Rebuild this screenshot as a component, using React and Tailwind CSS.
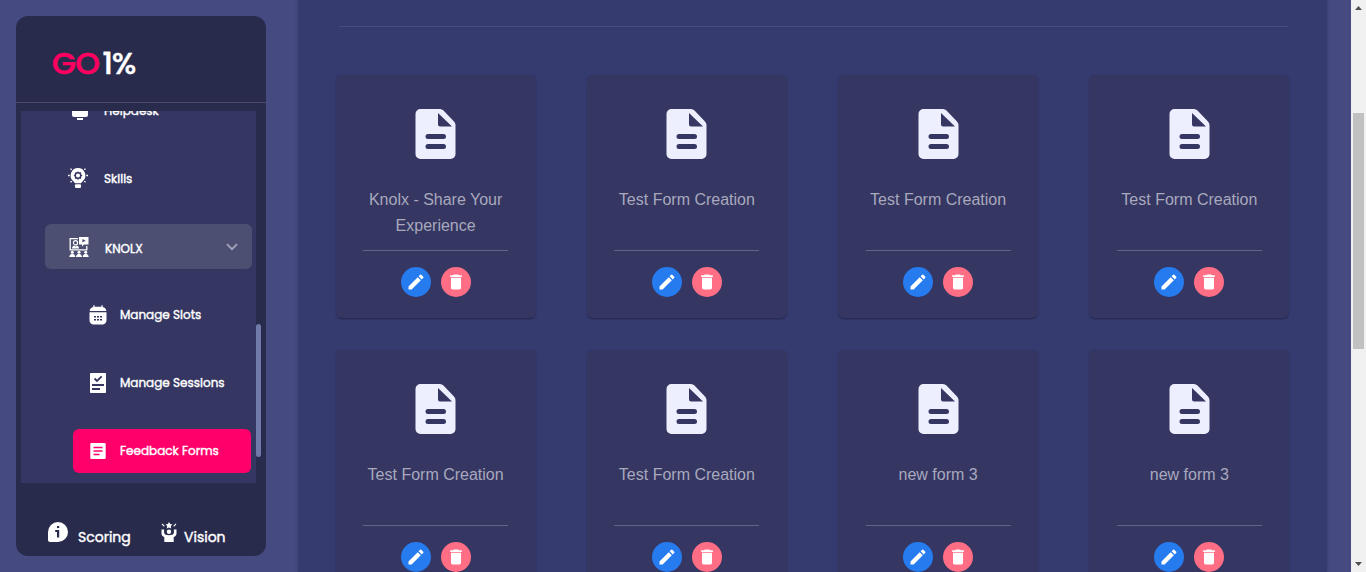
import { MdEdit, MdDelete } from "react-icons/md";

function MonitorIcon() {
  return (
    <svg width="20" height="20" viewBox="0 0 20 20" fill="#fff">
      <rect x="2" y="1" width="16" height="15" rx="2" />
      <rect x="7" y="17" width="6" height="2" />
    </svg>
  );
}

function SkillsIcon() {
  return (
    <svg width="20" height="20" viewBox="0 0 20 20" fill="#fff">
      <path d="M10 0a7.500 7.500 0 0 1 4.500 13.400L13 15.200H7l-1.500-1.800A7.500 7.500 0 0 1 10 0z" />
      <rect x="7" y="16.200" width="6" height="3.800" rx="1" />
      <circle cx="10" cy="7.500" r="2.800" fill="none" stroke="#353662" strokeWidth="1.500" />
      <path d="M10 3.400v1.500M10 10.200v1.500M5.900 7.500h1.500M12.700 7.500h1.500M7.100 4.600l1 1M12 9.500l1 1M7.100 10.500l1-1M12 5.500l1-1" stroke="#353662" strokeWidth="1.200" />
      <path d="M0 7.500h1.700M18.300 7.500H20M2.500 .6l1.200 1.200M17.500.6l-1.200 1.200M2.500 14.300l1.200-1.200M17.500 14.300l-1.200-1.200" stroke="#fff" strokeWidth="1.300" />
    </svg>
  );
}

function KnolxIcon() {
  return (
    <svg width="20" height="20" viewBox="0 0 20 20" fill="#fff">
      <path d="M9 1.700H1.200v11.100h16.600V9" fill="none" stroke="#fff" strokeWidth="1.300" />
      <path d="M10 0h9.500v7.500H15l-2 2V7.500h-3z" />
      <path d="M13.400 1.900v3.700l3.300-1.850z" fill="#4c4f72" />
      <circle cx="6.500" cy="5.700" r="2.100" fill="none" stroke="#fff" strokeWidth="1.200" />
      <path d="M3 11.500c.2-2 1.300-2.800 2.500-2.900l1 1.200 1-1.200c1.200.1 2.300.9 2.500 2.900z" />
      <circle cx="3.300" cy="15.200" r="1.500" />
      <circle cx="10" cy="15.200" r="1.500" />
      <circle cx="16.700" cy="15.200" r="1.500" />
      <path d="M.3 20c0-4 6-4 6 0zM7 20c0-4 6-4 6 0zM13.700 20c0-4 6-4 6 0z" />
    </svg>
  );
}

function CalendarIcon() {
  return (
    <svg width="18" height="20" viewBox="0 0 18 20" fill="#fff">
      <path d="M4.300 .3h1.300v1.500h6.800V.3h1.300v1.700c2 .3 3.300 1.800 3.700 4H.6c.4-2.200 1.700-3.700 3.700-4z" />
      <path d="M.5 7.200h17v7.300c0 3.500-1.500 5-4.800 5H5.300c-3.300 0-4.800-1.500-4.800-5z" />
      <path d="M5 11h2v1.600H5zM8 11h2v1.600H8zM11 11h2v1.600h-2zM5 14h2v1.600H5zM8 14h2v1.600H8zM11 14h2v1.600h-2z" fill="#353662" />
    </svg>
  );
}

function SessionsIcon() {
  return (
    <svg width="18" height="20" viewBox="0 0 18 20">
      <rect x="1" width="16" height="20" rx=".7" fill="#fff" />
      <path d="M5.500 5.500L8 8l4.700-4.700M3 12h12M3 16h8" fill="none" stroke="#353662" strokeWidth="1.800" />
    </svg>
  );
}

function FormsIcon() {
  return (
    <svg width="18" height="20" viewBox="0 0 18 20">
      <rect x="1.300" y="2" width="15.400" height="16" rx="1" fill="#fff" />
      <path d="M4.500 6.500h9M4.500 10h9M4.500 13.500h6" stroke="#ff006b" strokeWidth="1.300" />
    </svg>
  );
}

function InfoIcon() {
  return (
    <svg width="20" height="20" viewBox="0 0 20 20">
      <path d="M10 0a10 10 0 0 1 0 20H2a2 2 0 0 1-2-2v-8A10 10 0 0 1 10 0z" fill="#fff" />
      <path d="M9 4h2.200v2.100H9zM7.200 8h4v7.500H9V10H7.200z" fill="#292b4d" />
    </svg>
  );
}

function VisionIcon() {
  return (
    <svg width="16" height="20" viewBox="0 0 16 20" fill="#fff">
      <path d="M8 0l1.100 2 2.400.4-1.700 1.700.4 2.500L8 5.500 5.800 6.600l.4-2.500L4.500 2.400 6.900 2z" />
      <path d="M1 1.900l2.300 2.400M15 1.900l-2.300 2.400" stroke="#fff" strokeWidth="1.100" />
      <circle cx="8" cy="9.700" r="2.200" />
      <path d="M.5 7.500h2.600v3.200c.3 1.800 2.300 2.500 4.900 2.500s4.600-.7 4.900-2.500V7.500h2.600v4c0 1.700-1.200 2.900-2.800 3.700V20H3.300v-4.800C1.700 14.400.5 13.200.5 11.500z" />
    </svg>
  );
}

function DocumentIcon() {
  return (
    <svg width="41" height="50" viewBox="0 0 41 50" className="mt-[34px] shrink-0">
      <path fillRule="evenodd" d="M5.500 0H25q2 0 3.500 1.500l10.500 11Q40.500 14 40.500 16v29a5 5 0 0 1-5 5h-30a5 5 0 0 1-5-5V5a5 5 0 0 1 5-5zM23 4v11.500q0 2 2 2h12z" fill="#edefff" />
      <path d="M13 27.500h15.500M13 37.500h15.500" stroke="#353662" strokeWidth="5" strokeLinecap="round" />
    </svg>
  );
}

function NavItem({ icon, label, className, labelClass = "ml-[13px]" }) {
  return (
    <div className={`flex h-[44px] shrink-0 items-center ${className}`}>
      {icon}
      <span className={`text-[12px] leading-[18px] whitespace-nowrap text-white [-webkit-text-stroke:0.4px_white] ${labelClass}`}>
        {label}
      </span>
    </div>
  );
}

function Sidebar() {
  return (
    <aside className="mt-4 ml-4 flex h-[540px] w-[250px] shrink-0 flex-col overflow-hidden rounded-xl bg-[#292b4d] font-[Poppins,Inter,sans-serif]">
      <div className="flex h-[87px] shrink-0 items-center border-b border-[#4a4b66] pt-[7px] pl-[36px] text-[31px] leading-10 font-medium">
        <span className="tracking-[-0.5px] text-[#ff0060] [-webkit-text-stroke:0.6px_#ff0060]">GO</span>
        <span className="ml-[3px] tracking-[-1.5px] text-white [-webkit-text-stroke:0.4px_white]">1%</span>
      </div>
      <div className="mt-2 ml-[5px] flex h-[372px] shrink-0">
        <nav className="flex w-[235px] flex-col overflow-hidden bg-[#353662]">
          <NavItem icon={<MonitorIcon />} label="Helpdesk" className="-mt-[22px] ml-[49px]" labelClass="ml-[14px]" />
          <NavItem icon={<SkillsIcon />} label="Skills" className="mt-[23px] ml-[47px]" labelClass="mt-px ml-4" />
          <div className="mt-6 ml-6 flex h-[45px] w-[207px] shrink-0 items-center rounded-md bg-[#4c4f72]">
            <NavItem icon={<KnolxIcon />} label="KNOLX" className="w-[158px] pl-6" labelClass="mt-[5px] ml-4" />
            <svg width="12" height="8" viewBox="0 0 12 8" className="ml-[23px]">
              <path d="M1 1.200l5 5 5-5" fill="none" stroke="#a3a5b9" strokeWidth="1.800" />
            </svg>
          </div>
          <NavItem icon={<CalendarIcon />} label="Manage Slots" className="mt-6 ml-[68px]" />
          <NavItem icon={<SessionsIcon />} label="Manage Sessions" className="mt-6 ml-[68px]" />
          <NavItem icon={<FormsIcon />} label="Feedback Forms" className="mt-6 ml-[52px] w-[178px] rounded-md bg-[#ff006b] pl-4" />
        </nav>
        <div className="w-[5px] pt-[213px]">
          <div className="h-[133px] rounded-full bg-[#7079aa]" />
        </div>
      </div>
      <div className="flex pt-[39px] pl-8 text-[14px] leading-[30px] text-white">
        <InfoIcon />
        <span className="ml-[10px] w-[53px] [-webkit-text-stroke:0.4px_white]">Scoring</span>
        <div className="ml-[30px]"><VisionIcon /></div>
        <span className="ml-[7px] [-webkit-text-stroke:0.4px_white]">Vision</span>
      </div>
    </aside>
  );
}

function FormCard({ title }) {
  return (
    <article className="mx-auto flex h-[243px] w-[200px] flex-col items-center rounded-md bg-[#353662] shadow-[0_2px_2px_-1px_rgba(25,25,50,0.6),0_0_2px_rgba(30,30,60,0.2)]">
      <DocumentIcon />
      <h3 className="mt-[28px] h-[52px] w-[150px] text-center text-base leading-[26px] text-[#a8a9bd]">{title}</h3>
      <div className="mt-[11px] h-px w-[145px] shrink-0 bg-[#62648a]" />
      <div className="mt-4 flex gap-[10px]">
        <button className="flex size-[30px] items-center justify-center rounded-full bg-[#267bee] text-white">
          <MdEdit size={20} />
        </button>
        <button className="flex size-[30px] items-center justify-center rounded-full bg-[#ff6e84] text-white">
          <MdDelete size={20} />
        </button>
      </div>
    </article>
  );
}

const forms = [
  "Knolx - Share Your Experience",
  "Test Form Creation",
  "Test Form Creation",
  "Test Form Creation",
  "Test Form Creation",
  "Test Form Creation",
  "new form 3",
  "new form 3",
];

function PageScrollbar() {
  return (
    <div className="flex w-[15px] shrink-0 flex-col items-center justify-between bg-[#f1f1f1]">
      <svg width="15" height="15"><path d="M4 10h7L7.500 6z" fill="#505050" /></svg>
      <div className="mt-[98px] mb-auto h-[236px] w-[11px] bg-[#c1c1c1]" />
      <svg width="15" height="15"><path d="M4 5h7L7.500 9z" fill="#505050" /></svg>
    </div>
  );
}

export default function App() {
  return (
    <div className="flex h-[572px] w-[1366px] overflow-hidden bg-[#454a80] font-['Liberation_Sans',Arial,sans-serif]">
      <Sidebar />
      <main className="ml-8 w-[1029px] shrink-0 bg-[#353b6f] shadow-[0_0_3px_rgba(40,42,90,0.5)]">
        <div className="mt-[26px] ml-[41px] h-px w-[949px] bg-[#494d7b]" />
        <div className="mt-12 ml-3 grid w-[1005px] grid-cols-4 gap-y-8">
          {forms.map((title, i) => (
            <FormCard key={i} title={title} />
          ))}
        </div>
      </main>
      <div className="flex-1" />
      <PageScrollbar />
    </div>
  );
}
